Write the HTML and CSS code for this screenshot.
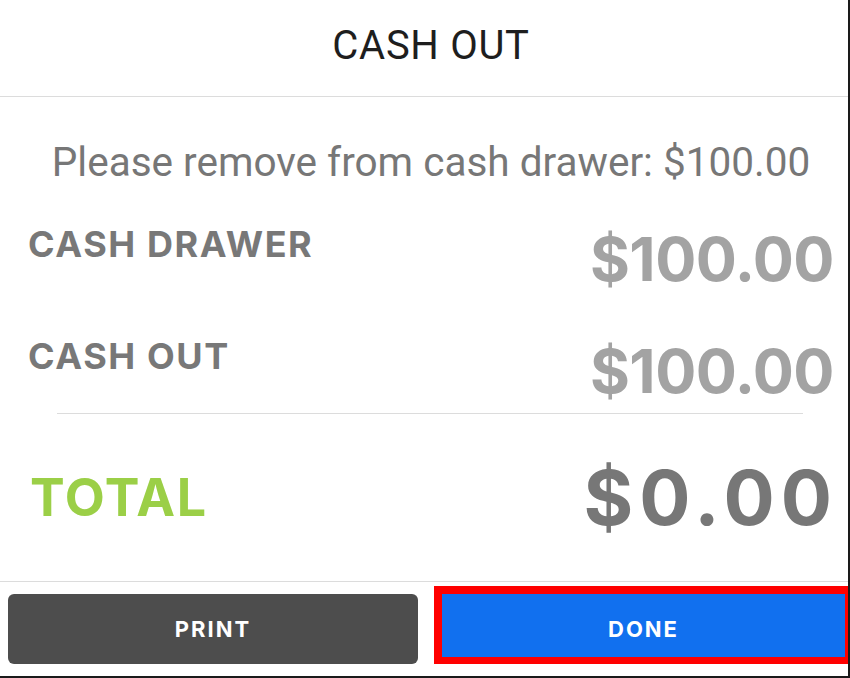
FILE: index.html
```html
<!DOCTYPE html>
<html lang="en">
<head>
  <meta charset="UTF-8">
  <title>Cash Out</title>
  <meta name="viewport" content="width=device-width, initial-scale=1">
  <link rel="stylesheet" href="styles.css">
</head>
<body>
  <div class="screen">
    <div class="header">
      <h1>CASH OUT</h1>
    </div>

    <div class="content">
      <p class="message">Please remove from cash drawer: $100.00</p>

      <div class="rows">
        <div class="row">
          <span class="label">CASH DRAWER</span>
          <span class="amount">$100.00</span>
        </div>
        <div class="row">
          <span class="label">CASH OUT</span>
          <span class="amount">$100.00</span>
        </div>
      </div>

      <div class="divider"></div>

      <div class="row total">
        <span class="label">TOTAL</span>
        <span class="amount">$0.00</span>
      </div>
    </div>

    <div class="footer">
      <button class="print">PRINT</button>
      <button class="done">DONE</button>
    </div>
  </div>
</body>
</html>
```

FILE: styles.css
```css
* { box-sizing: border-box; margin: 0; padding: 0; }
body {
  font-family: Roboto, 'Liberation Sans', sans-serif;
  background: #fff;
}
.screen {
  width: 850px;
  height: 678px;
  border-right: 2px solid #1a1a1a;
  border-bottom: 2px solid #1a1a1a;
  display: flex;
  flex-direction: column;
}

.header {
  height: 97px;
  border-bottom: 1px solid #dcdcdc;
  padding: 26px 0 0 14px;
  text-align: center;
}
.header h1 {
  font-size: 40px;
  font-weight: 400;
  line-height: 40px;
  letter-spacing: 0.7px;
  color: #1e1e1e;
}

.content {
  flex: 1;
  padding-top: 41px;
}
.message {
  font-size: 40.5px;
  line-height: 48px;
  color: #777;
  text-align: center;
  padding-left: 14px;
  margin-bottom: 38px;
}

.rows {
  display: flex;
  flex-direction: column;
  gap: 47px;
}
.row {
  display: flex;
  justify-content: space-between;
  align-items: flex-start;
  padding: 0 14px 0 28px;
}
.label {
  font-family: Inter, 'Liberation Sans', sans-serif;
  font-weight: 700;
  font-size: 36px;
  line-height: 40px;
  letter-spacing: 1.6px;
  color: #787878;
}
.amount {
  font-family: Inter, 'Liberation Sans', sans-serif;
  font-weight: 700;
  font-size: 61px;
  line-height: 60px;
  letter-spacing: -0.5px;
  margin-top: 5px;
  color: #a3a3a3;
}
.divider {
  height: 1px;
  background: #dcdcdc;
  margin: 12px 45px 0 57px;
}

.total {
  margin-top: 43px;
  padding-left: 30px;
}
.total .label {
  font-size: 52px;
  line-height: 60px;
  letter-spacing: 1.6px;
  margin-top: 11px;
  color: #9bcf47;
}
.total .amount {
  font-size: 76px;
  line-height: 80px;
  letter-spacing: 6px;
  margin-top: 0;
  margin-right: -4px;
  color: #777;
}

.footer {
  height: 95px;
  border-top: 1px solid #dcdcdc;
  display: grid;
  grid-template-columns: 410px 414px;
  column-gap: 16px;
  padding-left: 8px;
  align-items: start;
}
.footer button {
  border: none;
  color: #fff;
  font-family: Inter, 'Liberation Sans', sans-serif;
  font-weight: 700;
  font-size: 22px;
  letter-spacing: 2px;
  cursor: pointer;
}
.print {
  margin-top: 12px;
  height: 70px;
  background: #4d4d4d;
  border-radius: 6px;
}
.done {
  margin-top: 4px;
  height: 78px;
  padding-top: 6px;
  background: #1170ef;
  border: solid #ff0000 !important;
  border-width: 8px 3px 7px 8px !important;
}
```
